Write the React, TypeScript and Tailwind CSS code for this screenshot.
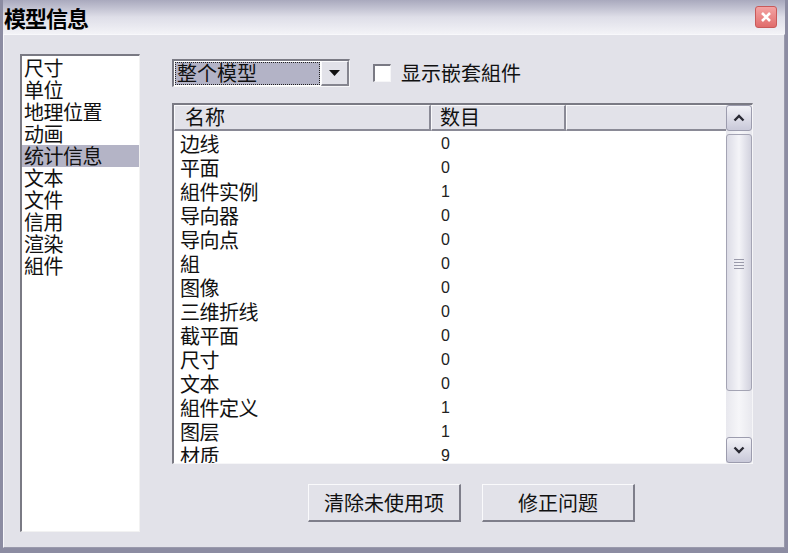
const font = "font-['SimSun','Noto_Sans_CJK_SC',sans-serif]";

const sections = ["尺寸", "单位", "地理位置", "动画", "统计信息", "文本", "文件", "信用", "渲染", "組件"];

const rows: [string, number][] = [
  ["边线", 0],
  ["平面", 0],
  ["組件实例", 1],
  ["导向器", 0],
  ["导向点", 0],
  ["組", 0],
  ["图像", 0],
  ["三维折线", 0],
  ["截平面", 0],
  ["尺寸", 0],
  ["文本", 0],
  ["組件定义", 1],
  ["图层", 1],
  ["材质", 9],
];

function Chevron({ up }: { up?: boolean }) {
  return (
    <svg width="12" height="8" viewBox="0 0 12 8">
      <path
        d={up ? "M1.5 6.5 L6 2 L10.5 6.5" : "M1.5 1.5 L6 6 L10.5 1.5"}
        fill="none"
        stroke="#2a2a34"
        strokeWidth="2.4"
      />
    </svg>
  );
}

function ScrollButton({ up }: { up?: boolean }) {
  return (
    <div className="h-[26px] w-[26px] rounded-[3px] border border-[#9c9cae] bg-gradient-to-b from-[#f2f2f7] to-[#c9c9d9] flex items-center justify-center">
      <Chevron up={up} />
    </div>
  );
}

function Scrollbar() {
  return (
    <div className="w-[26px] h-full flex flex-col bg-gradient-to-r from-[#e8e8ee] via-[#f6f6f9] to-[#e8e8ee]">
      <ScrollButton up />
      <div className="mt-[3px] h-[257px] rounded-[3px] border border-[#a4a4b4] bg-gradient-to-r from-[#dcdce6] via-[#f4f4f8] to-[#d2d2de] flex items-center justify-center">
        <div className="flex flex-col gap-[2px] mt-[2px]">
          <div className="w-[10px] h-px bg-[#9a9aaa]" />
          <div className="w-[10px] h-px bg-[#9a9aaa]" />
          <div className="w-[10px] h-px bg-[#9a9aaa]" />
          <div className="w-[10px] h-px bg-[#9a9aaa]" />
        </div>
      </div>
      <div className="flex-1" />
      <ScrollButton />
    </div>
  );
}

export default function App() {
  return (
    <div className={`w-[788px] h-[553px] overflow-hidden flex flex-col bg-[#e2e2e9] text-[#111] ${font}`}>
      <div className="h-[34px] shrink-0 flex items-center justify-between pl-[1px] pr-[8px] bg-gradient-to-b from-[#a9a9bd] via-[#dedee8] to-[#f3f3f7] border-l-[3px] border-r-[3px] border-[#8c8ca2]">
        <span className="text-[22px] leading-[26px] font-bold tracking-[-1px] text-black">模型信息</span>
        <div className="w-[22px] h-[22px] rounded-[3px] border border-[#c85a5a] bg-gradient-to-b from-[#f3a3a3] to-[#e06c6c] flex items-center justify-center">
          <svg width="12" height="12" viewBox="0 0 12 12">
            <path d="M2 2 L10 10 M10 2 L2 10" stroke="#fff" strokeWidth="2.6" />
          </svg>
        </div>
      </div>

      <div className="flex-1 flex border-l-[3px] border-r-[3px] border-b-[5px] border-[#8c8ca2]">
        <div className="flex-1 flex border-t border-l border-[#f8f8fb] border-r border-b border-r-[#9a9aac] border-b-[#9a9aac] pl-[16px] pt-[19px]">
          <div className="w-[120px] h-[478px] shrink-0 bg-white border-t-2 border-l-2 border-[#7a7a84] border-r border-b border-r-[#f2f2f2] border-b-[#f2f2f2] pt-[1px]">
            {sections.map((s, i) => (
              <div
                key={s}
                className={`h-[22px] leading-[22px] text-[20px] pl-[2px] tracking-[-0.5px] ${i === 4 ? "bg-[#b4b4c6]" : ""}`}
              >
                {s}
              </div>
            ))}
          </div>

          <div className="ml-[32px] w-[581px] flex flex-col">
            <div className="mt-[5px] h-[28px] flex items-center">
              <div className="w-[178px] h-[28px] flex border-t-2 border-l-2 border-[#7a7a84] border-r border-b border-r-[#f6f6f8] border-b-[#f6f6f8] bg-white">
                <div className="flex-1 m-[1px] bg-[#b3b3c6] border border-dotted border-[#222] text-[20px] leading-[20px] pl-[1px]">
                  整个模型
                </div>
                <div className="w-[28px] bg-[#e2e2e9] border-t border-l border-[#fafafc] border-r-2 border-b-2 border-r-[#85858f] border-b-[#85858f] flex items-center justify-center">
                  <svg width="11" height="6" viewBox="0 0 11 6">
                    <path d="M0 0 H11 L5.5 6 Z" fill="#111" />
                  </svg>
                </div>
              </div>
              <div className="ml-[23px] w-[18px] h-[18px] bg-white border-t-2 border-l-2 border-[#7a7a84] border-r border-b border-r-[#f6f6f8] border-b-[#f6f6f8]" />
              <span className="ml-[10px] text-[20px] leading-[24px]">显示嵌套組件</span>
            </div>

            <div className="mt-[16px] h-[361px] flex border-t-2 border-l-2 border-[#7a7a84] border-r border-b border-r-[#f6f6f8] border-b-[#f6f6f8] bg-white">
              <div className="flex-1 flex flex-col overflow-hidden">
                <div className="h-[26px] shrink-0 flex bg-[#e2e2e9] text-[20px]">
                  <div className="w-[257px] border-t border-l border-[#fafafc] border-r-2 border-b-2 border-r-[#8a8a96] border-b-[#8a8a96] pl-[10px] leading-[22px]">
                    名称
                  </div>
                  <div className="w-[135px] border-t border-l border-[#fafafc] border-r-2 border-b-2 border-r-[#8a8a96] border-b-[#8a8a96] pl-[8px] leading-[22px]">
                    数目
                  </div>
                  <div className="flex-1 border-t border-l border-[#fafafc] border-b-2 border-b-[#8a8a96]" />
                </div>
                <div className="pt-[1px]">
                  {rows.map(([name, n], i) => (
                    <div key={i} className="h-[24px] flex items-center text-[20px] leading-[24px]">
                      <span className="w-[267px] pl-[6px] tracking-[-0.5px]">{name}</span>
                      <span className="font-['Liberation_Sans',sans-serif] text-[16px] text-[#222]">{n}</span>
                    </div>
                  ))}
                </div>
              </div>
              <Scrollbar />
            </div>

            <div className="mt-[20px] ml-[136px] flex gap-[21px]">
              <button className="w-[153px] h-[38px] bg-[#e2e2e9] text-[20px] leading-[24px] border-t border-l border-[#fafafc] border-r-2 border-b-2 border-r-[#7e7e8a] border-b-[#7e7e8a]">
                清除未使用项
              </button>
              <button className="w-[153px] h-[38px] bg-[#e2e2e9] text-[20px] leading-[24px] border-t border-l border-[#fafafc] border-r-2 border-b-2 border-r-[#7e7e8a] border-b-[#7e7e8a]">
                修正问题
              </button>
            </div>
          </div>
        </div>
      </div>
    </div>
  );
}
